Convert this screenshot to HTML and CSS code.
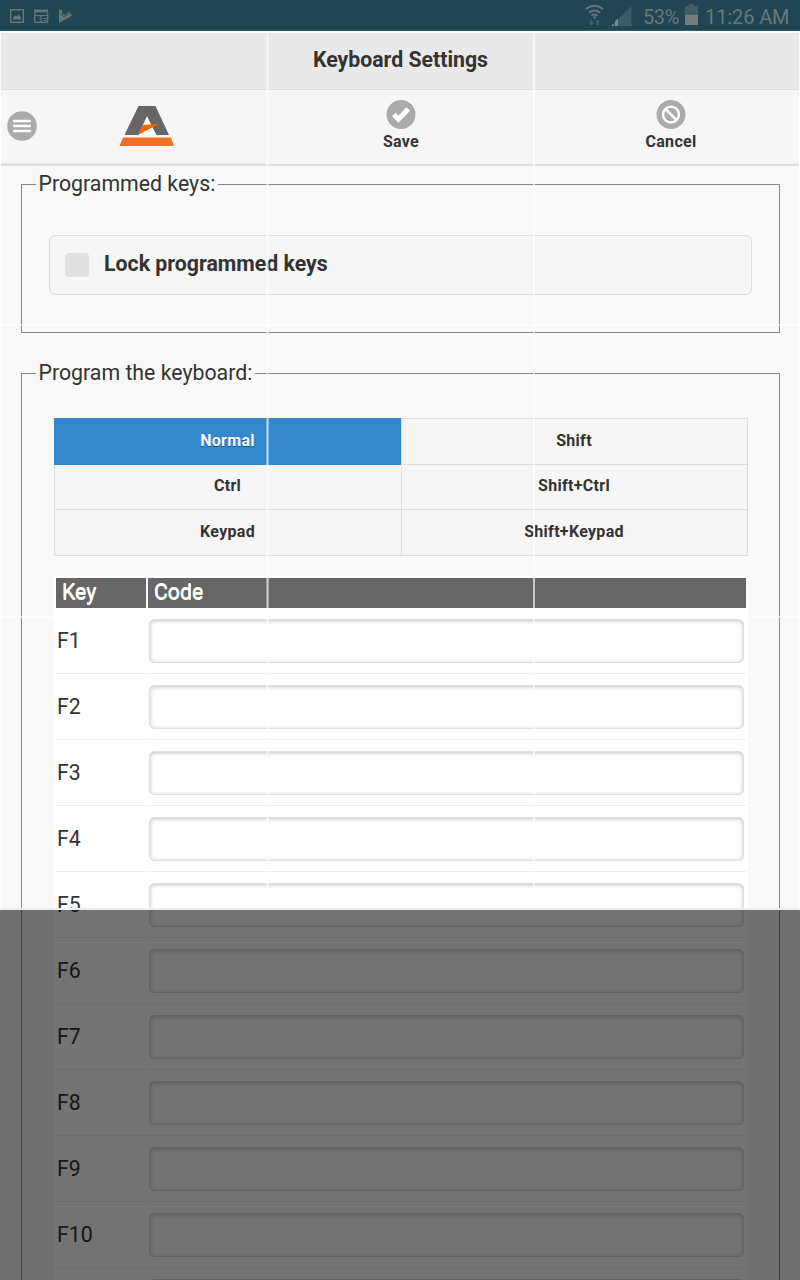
FILE: index.html
```html
<!DOCTYPE html>
<html lang="en">
<head>
<meta charset="utf-8">
<title>Keyboard Settings</title>
<link rel="stylesheet" href="styles.css">
</head>
<body>
<div class="screen">
  <div class="status">
    <svg class="status-left" width="80" height="31" viewBox="0 0 80 31">
      <path d="M10.7 9.7h12.6v12.6H10.7z" fill="none" stroke="#66777c" stroke-width="1.4"/>
      <path d="M13 19.500v-2l2-2 1.500 1 2-2 2.500 3v2z" fill="#66777c"/>
      <path d="M34.700 13v8.300q0 1 1 1h11q1 0 1-1V13M34 15.500h14M41 15.500v6.500M43 18.500h4M43 20.500h4" fill="none" stroke="#66777c" stroke-width="1.200"/>
      <path d="M34 10l1-1 1 1 1-1 1 1 1-1 1 1 1-1 1 1 1-1 1 1 1-1 1 1 1-1 1 1v2.500H34z" fill="#66777c"/>
      <path d="M59 9l4 2.300-1 1.700 2.700 2.500 4-3.800L72 15.600 59 23z" fill="#66777c"/>
      <path d="M60.500 13.500l4 3.900 4.800-4.800" fill="none" stroke="#214554" stroke-width=".8"/>
    </svg>
    <svg class="status-right" width="60" height="31" viewBox="580 0 60 31">
      <g fill="none" stroke="#66777c" stroke-width="1.8">
        <path d="M586 9q8.500-6.500 17 0M589 12.700q5.500-4.500 11 0M591.500 15.800q3-2.500 6 0"/>
      </g>
      <circle cx="594.500" cy="17.500" r="1.300" fill="#66777c"/>
      <path d="M590.300 20h2v3h1.500l-2.500 2.700-2.500-2.700h1.500zM596.700 25.500v-3h-1.500l2.500-3 2.500 3h-1.500v3z" fill="#42616d"/>
      <path d="M611 26L631.500 6v20z" fill="#3a5b68"/>
      <path d="M611 26l3-2.500V26zM615 26v-5l3-2.500V26z" fill="#7d898c"/>
    </svg>
    <span class="percent">53%</span>
    <svg class="battery" width="13" height="31" viewBox="0 0 13 31">
      <path d="M0 6h4V4h5v2h4v9H0z" fill="#3f5c67"/><path d="M0 15h13v10H0z" fill="#727d80"/>
    </svg>
    <span class="clock">11:26 AM</span>
  </div>

  <header class="title"><h1>Keyboard Settings</h1></header>
  <nav class="toolbar">
    <div class="brand">
      <svg width="30" height="30" viewBox="0 0 30 30"><circle cx="15" cy="15" r="14.800" fill="#ababab"/><path d="M7 10h16M7 15h16M7 20h16" stroke="#fff" stroke-width="2.300" stroke-linecap="round"/></svg>
      <svg class="logo" width="56" height="42" viewBox="0 0 56 42">
        <path d="M19.500 1H36.500L50 30H37.500L28 11.500 19.500 30H5.500z" fill="#666"/>
        <path d="M28 11.500L36.500 30H19.500z" fill="#fff"/>
        <path d="M23.500 20L40 19 19 30z" fill="#ff6600"/>
        <path d="M4 32.500H52L55 41H.5z" fill="#f36f21"/>
      </svg>
    </div>
    <div class="action">
      <svg width="30" height="29" viewBox="0 0 30 29"><circle cx="15" cy="14.500" r="14.500" fill="#ababab"/><path d="M7.800 14.500l4.700 4.700L22.300 9" fill="none" stroke="#fff" stroke-width="5"/></svg>
      <span>Save</span>
    </div>
    <div class="action">
      <svg width="30" height="29" viewBox="0 0 30 29"><circle cx="15" cy="14.500" r="14.500" fill="#ababab"/><circle cx="15" cy="14.500" r="7.900" fill="none" stroke="#fff" stroke-width="2.400"/><path d="M9.500 9l11 11" stroke="#fff" stroke-width="2.700"/></svg>
      <span>Cancel</span>
    </div>
  </nav>

  <main class="content">
    <fieldset class="group group-lock">
      <legend>Programmed keys:</legend>
      <div class="lock"><span class="check"></span><span>Lock programmed keys</span></div>
    </fieldset>
    <fieldset class="group group-keys">
      <legend>Program the keyboard:</legend>
      <div class="modes">
        <div class="mode active">Normal</div><div class="mode">Shift</div>
        <div class="mode">Ctrl</div><div class="mode">Shift+Ctrl</div>
        <div class="mode">Keypad</div><div class="mode">Shift+Keypad</div>
      </div>
      <div class="table">
        <div class="th">Key</div><div class="th">Code</div>
        <div class="td">F1</div><div class="td"><div class="field"></div></div>
        <div class="td">F2</div><div class="td"><div class="field"></div></div>
        <div class="td">F3</div><div class="td"><div class="field"></div></div>
        <div class="td">F4</div><div class="td"><div class="field"></div></div>
        <div class="td">F5</div><div class="td"><div class="field"></div></div>
        <div class="td">F6</div><div class="td"><div class="field"></div></div>
        <div class="td">F7</div><div class="td"><div class="field"></div></div>
        <div class="td">F8</div><div class="td"><div class="field"></div></div>
        <div class="td">F9</div><div class="td"><div class="field"></div></div>
        <div class="td">F10</div><div class="td"><div class="field"></div></div>
        <div class="td"></div><div class="td"><div class="field"></div></div>
      </div>
    </fieldset>
  </main>

  <!-- Crop selection with rule-of-thirds guides -->
  <div class="selection">
    <i class="guide v v1"></i><i class="guide v v2"></i>
    <i class="guide h h1"></i><i class="guide h h2"></i>
  </div>
  <div class="shade"></div>
</div>
</body>
</html>
```
FILE: styles.css
```css
* { box-sizing: border-box; }
body { margin: 0; font-family: Roboto, "Liberation Sans", sans-serif; color: #333; }
.screen { position: relative; width: 800px; height: 1280px; overflow: hidden; background: #f9f9f9; }

.status { display: flex; height: 31px; background: #214554; border-bottom: 1px solid #2f6072; color: #66777c; font-size: 20px; line-height: 34px; white-space: nowrap; }
.status svg { flex: none; }
.status-right { margin-left: 500px; }
.percent { width: 42px; margin-left: 3px; letter-spacing: -.4px; }
.clock { margin-left: 7px; letter-spacing: -.1px; }

.title { height: 59px; background: #e9e9e9; border-bottom: 1px solid #ddd; }
.title h1 { margin: 0; padding: 2px 0 0 1px; text-align: center; font-size: 21.25px; line-height: 54px; font-weight: 700; text-shadow: 0 1px 0 #eee; }
.toolbar { display: grid; grid-template-columns: 266px 270px 1fr; height: 76px; background: #f6f6f6; border-bottom: 2px solid #dfdfdf; }
.brand { display: flex; align-items: center; padding: 0 0 1px 7px; border-bottom: 1px solid #e6e6e6; }
.logo { margin: -1px 0 0 82px; }
.action { display: flex; flex-direction: column; align-items: center; padding-top: 10px; font-size: 16px; letter-spacing: .3px; font-weight: 700; text-shadow: 0 1px 0 #f3f3f3; }
.action span { line-height: 25px; }
.action:last-child { padding-left: 6px; }

.content { display: flex; flex-direction: column; gap: 28px; padding: 6px 20px 0 21px; }
.group { margin: 0; min-width: 0; border: 1px solid #888; }
.group legend { padding: 0 3px 0 2.5px; font-size: 21.3px; line-height: 24px; height: 24px; }
.group-lock { padding: 39px 27px 37px; }
.group-lock legend { margin-left: -13px; }
.group-keys { padding: 33px 31px 0 32px; }
.group-keys legend { margin-left: -18px; }
.lock { display: flex; align-items: center; height: 60px; padding-left: 15px; background: #f6f6f6; border: 1px solid #ddd; border-radius: 6px; font-size: 21.3px; font-weight: 700; text-shadow: 0 1px 0 #f3f3f3; line-height: 56px; }
.lock span:last-child { margin-top: -3px; }
.check { width: 24px; height: 24px; margin-right: 15px; border-radius: 4px; background: #e0e0e0; }

.modes { display: grid; grid-template-columns: 347px 346px; grid-template-rows: 47px 45px 46px; border-right: 1px solid #ddd; }
.mode { padding-right: 1px; background: #f6f6f6; border-left: 1px solid #ddd; border-bottom: 1px solid #ddd; text-align: center; font-size: 16px; letter-spacing: .3px; font-weight: 700; line-height: 43px; text-shadow: 0 1px 0 #f3f3f3; }
.mode:nth-child(2) { border-top: 1px solid #ddd; }
.mode:nth-child(3), .mode:nth-child(4) { line-height: 42px; }
.mode:nth-child(5), .mode:nth-child(6) { line-height: 44px; }
.mode.active { background: #3388cc; border-color: #3388cc; color: #fff; line-height: 45px; text-shadow: 0 1px 0 #005599; }

.table { display: grid; grid-template-columns: 90px 598px; grid-template-rows: 30px; grid-auto-rows: 64px; gap: 2px; margin-top: 20px; padding: 2px; background: #fff; font-size: 21.25px; }
.th { padding-left: 6px; background: #666; color: #fff; line-height: 28px; -webkit-text-stroke: .2px #fff; text-shadow: 0 1px 0 #fff; }
.td { padding: 9px 2px 0 1px; border-bottom: 1px solid #ededed; line-height: 44px; }
.field { height: 44px; border: 1px solid #ddd; border-radius: 5px; background: #fff; box-shadow: inset 0 1px 4px rgba(0,0,0,.24); }

.selection { position: absolute; left: 0; top: 31px; width: 800px; height: 879px; border: 1px solid #fff; border-top-width: 2px; border-bottom-width: 2px; border-bottom-color: #eee; }
.guide { position: absolute; background: rgba(255,255,255,.62); }
.v { top: 0; bottom: 0; width: 2px; }
.v1 { left: 265px; width: 3px; background: linear-gradient(to right, rgba(255,255,255,.35) 1px, rgba(255,255,255,.7) 1px 2px, rgba(255,255,255,.4) 2px); }
.v2 { left: 532px; }
.h { left: 0; right: 0; height: 2px; }
.h1 { top: 291px; }
.h2 { top: 583px; }
.shade { position: absolute; left: 0; top: 910px; width: 800px; height: 370px; background: rgba(0,0,0,.55); }
```
